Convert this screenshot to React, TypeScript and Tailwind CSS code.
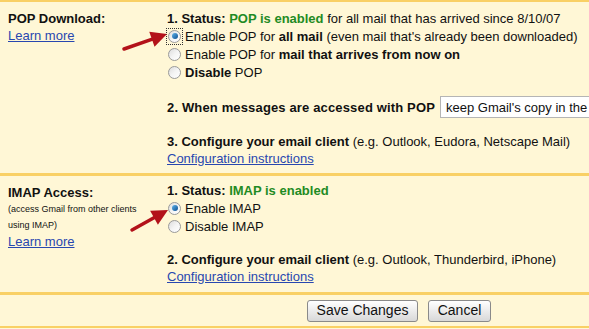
import React from 'react';

function Radio({ checked = false, focused = false }: { checked?: boolean; focused?: boolean }) {
  return (
    <span
      className={
        'inline-flex items-center justify-center w-[17px] h-[17px] mr-[2px] shrink-0 ' +
        (focused ? 'outline outline-1 outline-dotted outline-[#333] -outline-offset-1' : '')
      }
    >
      <span className="flex items-center justify-center w-[13px] h-[13px] rounded-full border border-[#9a9a9a] bg-gradient-to-br from-[#dcdcdc] via-[#f4f4f4] to-white">
        {checked && (
          <span className="w-[6px] h-[6px] rounded-full bg-gradient-to-br from-[#5fb4ec] to-[#0a4f8f]" />
        )}
      </span>
    </span>
  );
}

function Link({ children }: { children: React.ReactNode }) {
  return <a className="text-[#2847b0] underline cursor-pointer">{children}</a>;
}

function Arrow({ x1, y1, x2, y2 }: { x1: number; y1: number; x2: number; y2: number }) {
  const a = Math.atan2(y2 - y1, x2 - x1);
  const len = 16;
  const w = 8;
  const bx = x2 - Math.cos(a) * len;
  const by = y2 - Math.sin(a) * len;
  const p1 = `${bx + Math.sin(a) * w},${by - Math.cos(a) * w}`;
  const p2 = `${bx - Math.sin(a) * w},${by + Math.cos(a) * w}`;
  return (
    <g>
      <line x1={x1} y1={y1} x2={bx + Math.cos(a) * 2} y2={by + Math.sin(a) * 2} stroke="#b3121a" strokeWidth="3.5" strokeLinecap="round" />
      <polygon points={`${x2},${y2} ${p1} ${p2}`} fill="#b3121a" />
    </g>
  );
}

export default function App() {
  return (
    <div className="relative w-[589px] h-[329px] overflow-hidden bg-[#fff7d6] text-[13px] leading-[17px] text-[#111] font-['Liberation_Sans',Arial,sans-serif]">
      <div className="border-t-2 border-[#f9d065] flex pt-[8px] pb-[6px]">
        <div className="w-[167px] pl-[8px] shrink-0">
          <div className="font-bold">POP Download:</div>
          <Link>Learn more</Link>
        </div>
        <div className="flex flex-col whitespace-nowrap">
          <div>
            <b>1. Status: </b>
            <b className="text-[#1f8b24]">POP is enabled</b> for all mail that has arrived since 8/10/07
          </div>
          <label className="flex items-center h-[18px] -ml-[1px]">
            <Radio checked focused />
            <span>
              Enable POP for <b>all mail</b> (even mail that's already been downloaded)
            </span>
          </label>
          <label className="flex items-center h-[18px] -ml-[1px]">
            <Radio />
            <span>
              Enable POP for <b>mail that arrives from now on</b>
            </span>
          </label>
          <label className="flex items-center h-[18px] -ml-[1px]">
            <Radio />
            <span>
              <b>Disable</b> POP
            </span>
          </label>
          <div className="flex items-center mt-[15px] h-[22px]">
            <b className="tracking-[0.15px]">2. When messages are accessed with POP</b>
            <div className="ml-[5px] h-[22px] w-[230px] shrink-0 bg-white border border-[#b5b5b5] pl-[5px] flex items-center overflow-hidden">
              keep Gmail's copy in the Inbox
            </div>
          </div>
          <div className="mt-[15px]">
            <b>3. Configure your email client</b> (e.g. Outlook, Eudora, Netscape Mail)
          </div>
          <div>
            <Link>Configuration instructions</Link>
          </div>
        </div>
      </div>

      <div className="border-t-[3px] border-[#f9d065] flex pt-[6px] pb-[7px]">
        <div className="w-[167px] pl-[8px] shrink-0">
          <div className="font-bold mt-[2px]">IMAP Access:</div>
          <div className="text-[9px] leading-[16px] w-[145px]">(access Gmail from other clients using IMAP)</div>
          <Link>Learn more</Link>
        </div>
        <div className="flex flex-col whitespace-nowrap">
          <div>
            <b>1. Status: </b>
            <b className="text-[#1f8b24]">IMAP is enabled</b>
          </div>
          <label className="flex items-center h-[18px] -ml-[1px]">
            <Radio checked />
            <span>Enable IMAP</span>
          </label>
          <label className="flex items-center h-[18px] -ml-[1px]">
            <Radio />
            <span>Disable IMAP</span>
          </label>
          <div className="mt-[16px]">
            <b>2. Configure your email client</b> (e.g. Outlook, Thunderbird, iPhone)
          </div>
          <div>
            <Link>Configuration instructions</Link>
          </div>
        </div>
      </div>

      <div className="border-t-[3px] border-b-2 border-[#f9d065] h-[36px] flex items-center pl-[307px] gap-[10px]">
        <button className="h-[22px] w-[111px] rounded-[3px] border border-[#8a8a8a] bg-gradient-to-b from-white to-[#d8d8d8] text-[14px] text-[#111]">
          Save Changes
        </button>
        <button className="h-[22px] w-[63px] rounded-[3px] border border-[#8a8a8a] bg-gradient-to-b from-white to-[#d8d8d8] text-[14px] text-[#111]">
          Cancel
        </button>
      </div>

      <svg className="absolute left-0 top-0 pointer-events-none" width="589" height="329">
        <Arrow x1={124} y1={49} x2={167} y2={34} />
        <Arrow x1={132} y1={230} x2={168} y2={210} />
      </svg>
    </div>
  );
}
